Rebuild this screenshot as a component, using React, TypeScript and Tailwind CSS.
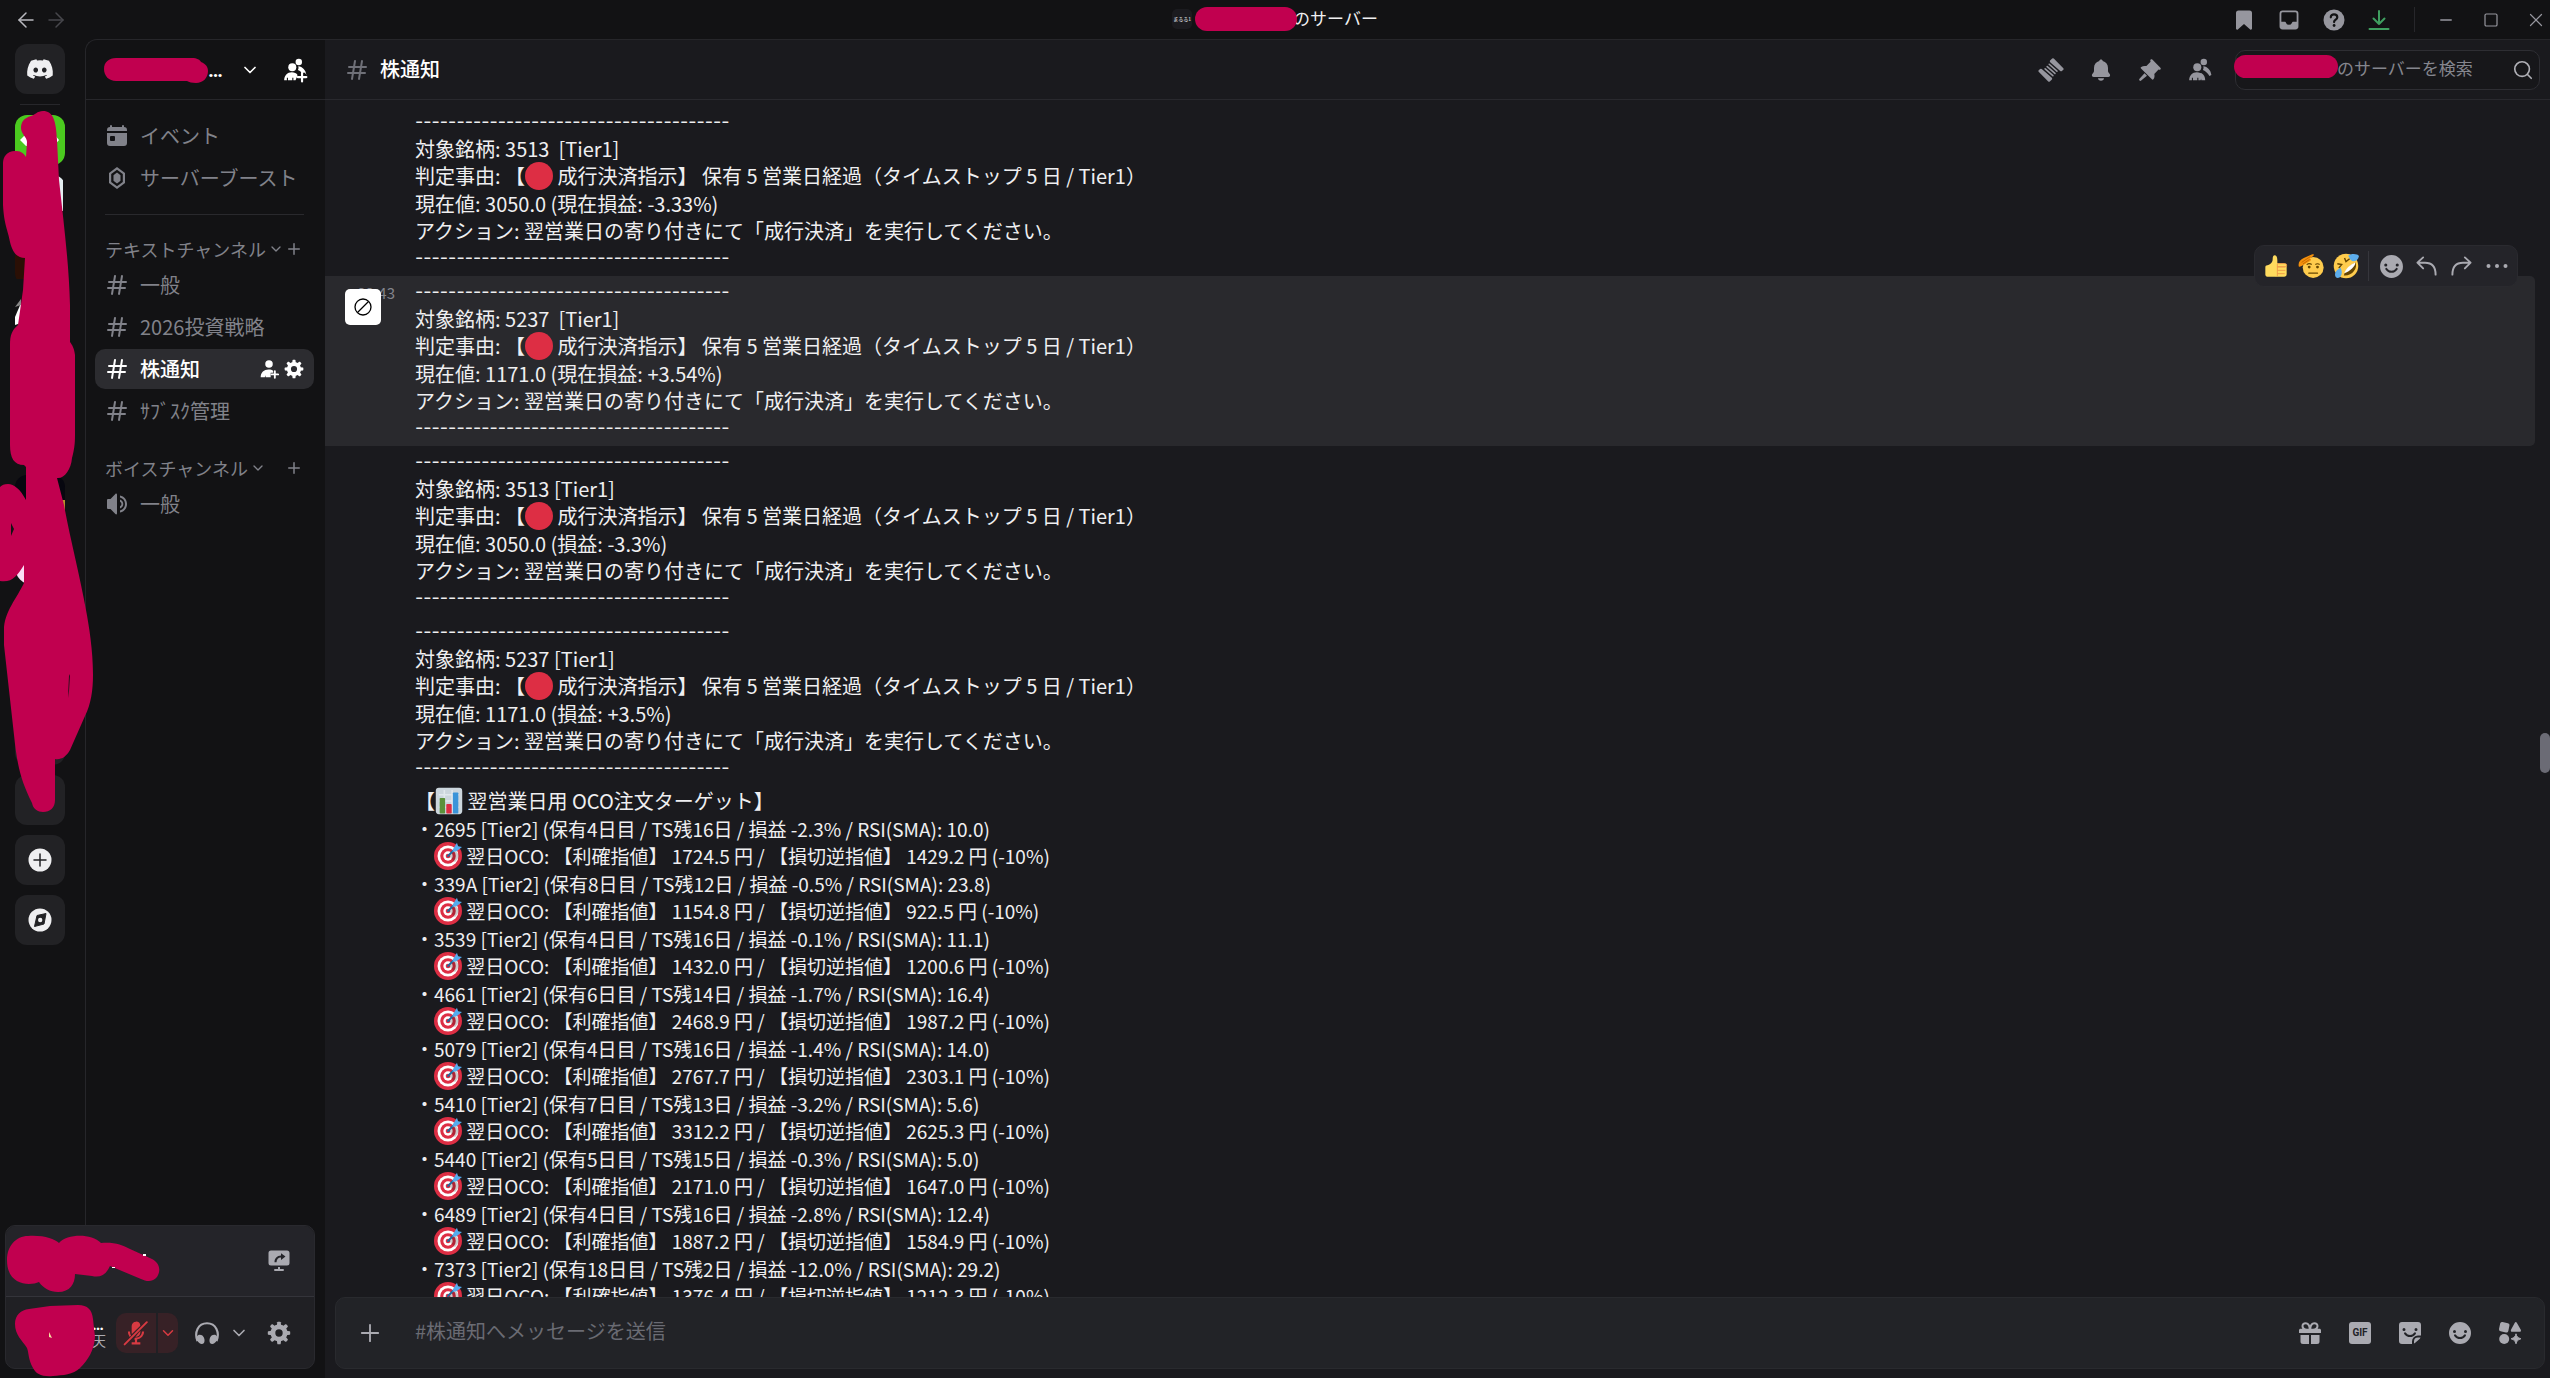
import type { ReactNode } from "react";
import { ArrowLeft, ArrowRight, ChevronDown, Minus, Plus, Search, Square, X } from "lucide-react";
import { FaDiscord } from "react-icons/fa";

type IconProps = { className?: string };

const Svg = ({ className = "w-6 h-6", children }: IconProps & { children: ReactNode }) => (
  <svg viewBox="0 0 24 24" fill="currentColor" aria-hidden="true" className={`${className} shrink-0`}>
    {children}
  </svg>
);

const HashIcon = ({ className }: IconProps) => (
  <Svg className={className}>
    <path
      fillRule="evenodd"
      d="M10.99 3.16A1 1 0 1 0 9 2.84L8.15 8H4a1 1 0 0 0 0 2h3.82l-.67 4H3a1 1 0 1 0 0 2h3.82l-.8 4.84a1 1 0 0 0 1.97.32L8.85 16h4.97l-.8 4.84a1 1 0 0 0 1.97.32l.86-5.16H20a1 1 0 1 0 0-2h-3.82l.67-4H21a1 1 0 1 0 0-2h-3.82l.8-4.84a1 1 0 1 0-1.97-.32L15.15 8h-4.97l.8-4.84ZM14.15 14l.67-4H9.85l-.67 4h4.97Z"
    />
  </Svg>
);

const CalendarIcon = () => (
  <Svg>
    <path d="M6 1a1 1 0 0 1 1 1v1h10V2a1 1 0 1 1 2 0v1a3 3 0 0 1 3 3v1H2V6a3 3 0 0 1 3-3V2a1 1 0 0 1 1-1Z" />
    <path fillRule="evenodd" d="M2 9h20v10a3 3 0 0 1-3 3H5a3 3 0 0 1-3-3V9Zm4 3a1 1 0 0 0-1 1v3a1 1 0 0 0 1 1h3a1 1 0 0 0 1-1v-3a1 1 0 0 0-1-1H6Z" />
  </Svg>
);

const BoostIcon = () => (
  <Svg>
    <path fillRule="evenodd" d="M12 1 20 7v10l-8 6-8-6V7l8-6Zm0 2.800L6.200 8.100v7.800l5.800 4.300 5.800-4.300V8.100L12 3.800Z" />
    <path d="m12 6.500 3.500 2.700v5.600L12 17.500l-3.500-2.700V9.200Z" />
  </Svg>
);

const SpeakerIcon = () => (
  <Svg>
    <path d="M12 2.500c0-.9-1-1.200-1.600-.6L5.500 7H3a1 1 0 0 0-1 1v8a1 1 0 0 0 1 1h2.500l4.900 5.100c.6.600 1.600.3 1.600-.6v-19Z" />
    <path d="M15 3.500c4.300.8 7 4.200 7 8.500s-2.700 7.700-7 8.500v-2c3.200-.8 5-3.300 5-6.500s-1.800-5.700-5-6.500v-2Z" />
    <path d="M15 7.500c2 .6 3.300 2.300 3.300 4.500S17 15.900 15 16.500v-2.200c1-.5 1.400-1.300 1.400-2.300s-.4-1.800-1.400-2.300V7.500Z" />
  </Svg>
);

const PeopleIcon = ({ plus = false }: { plus?: boolean }) => (
  <Svg className="w-[26px] h-[26px]">
    <circle cx="9.500" cy="9.500" r="3.700" />
    <path d="M2 21.500c0-4.500 3-7.500 7-7.500 2.500 0 4.300 1 5.500 2.500L12.500 21.500H10.500v-2.300h-1v2.300h-4v-2.300h-1v2.300H2Z" />
    {!plus && <path d="M12 15h1.500c2 1.300 3.300 3.600 3.300 6.500h-3.500Z" />}
    <circle cx="15.500" cy="4.500" r="3" />
    <path d="M15 8.500c4 .3 7 3.600 7.500 8l-1.800 1c-1.500-2.600-3.400-4.300-6-5.500.6-1.100.7-2.400.3-3.500Z" />
    {plus && (
      <>
        <path stroke="#121214" strokeWidth="6" d="M18.500 14.500v8M14.500 18.500h8" />
        <path stroke="currentColor" strokeWidth="2" strokeLinecap="round" d="M18.500 14.500v8M14.500 18.500h8" />
      </>
    )}
  </Svg>
);

const PersonAddIcon = () => (
  <Svg className="w-5 h-5">
    <circle cx="12" cy="6" r="4.500" />
    <path d="M2 22c0-6 4-9.500 9.500-9.500 2.500 0 4.300.6 5.500 1.500v2.500h-3V22H8l-.5-2.500L7 22H2Z" />
    <path stroke="currentColor" strokeWidth="2.200" strokeLinecap="round" d="M19 14.500v8M15 18.500h8" />
  </Svg>
);

const GearIcon = ({ className }: IconProps) => (
  <Svg className={className}>
    {[0, 45, 90, 135, 180, 225, 270, 315].map((a) => (
      <path key={a} d="M9.800 5 10.300 1.300Q10.500.8 11 .8h2q.5 0 .7.5L14.200 5Z" transform={`rotate(${a} 12 12)`} />
    ))}
    <path fillRule="evenodd" d="M12 3.500a8.500 8.500 0 1 1 0 17 8.500 8.500 0 0 1 0-17Zm0 4.800a3.700 3.700 0 1 0 0 7.400 3.700 3.700 0 0 0 0-7.400Z" />
  </Svg>
);

const SmileIcon = ({ className }: IconProps) => (
  <Svg className={className}>
    <path
      fillRule="evenodd"
      d="M12 1a11 11 0 1 1 0 22 11 11 0 0 1 0-22ZM6.500 9a1.500 1.500 0 1 0 0 3 1.500 1.500 0 0 0 0-3Zm11 0a1.500 1.500 0 1 0 0 3 1.500 1.500 0 0 0 0-3ZM7.900 13.800a1 1 0 0 0-1.700 1.100 6.900 6.900 0 0 0 11.600 0 1 1 0 0 0-1.700-1.100 4.900 4.900 0 0 1-8.200 0Z"
    />
  </Svg>
);

const ThreadsIcon = () => (
  <Svg className="w-[26px] h-[26px]">
    <g transform="rotate(-43 12 12)">
      <path d="M2.500 5.500q0-1 1-1h1.700q1 0 1.200 1l1.200 12q0 1.500-1 1.500H4q-1 0-1.100-1ZM16.400 6.500q0-1.500 1-1.500H20q1 0 1.100 1l.4 12.500q0 1-1 1h-1.700q-1 0-1.200-1Z" />
      <path stroke="currentColor" strokeWidth="1.500" strokeLinecap="round" d="m8.800 7.500.9 9.500M11.600 7.300l.9 9.500M14.400 7l.9 9.500" />
    </g>
  </Svg>
);

const BellIcon = () => (
  <Svg>
    <path d="M12 1.500c.9 0 1.600.6 1.700 1.400 3.300.8 5.300 3.400 5.300 7.100v3c0 .8.300 1.500.9 2l.8.900c1 1.200.2 3.100-1.500 3.100H4.800c-1.700 0-2.500-1.900-1.500-3.100l.8-.9c.6-.5.900-1.200.9-2v-3c0-3.700 2-6.300 5.300-7.100.1-.8.800-1.400 1.700-1.400ZM9 20.200h6c0 1.500-1.300 2.500-3 2.500s-3-1-3-2.500Z" />
  </Svg>
);

const PinIcon = () => (
  <Svg>
    <path d="M12.500 1.700c.5-.6 1.300-.6 1.800-.1l8.100 8.100c.6.6.5 1.300-.1 1.800-.6.400-1.200.4-1.800 0l-4.200 4.400c.5 2.100.2 3.800-.9 5.300-.4.5-1 .6-1.500.1L3 10.400c-.5-.5-.4-1.200.2-1.500 1.600-.9 3.200-1.200 5.200-.8l4.200-4.400c-.5-.7-.5-1.400-.1-2ZM6.500 15.200l2.500 2.500-5.800 4.900c-.6.5-1.300.3-1.700-.1-.5-.4-.5-1.100 0-1.700l5-5.600Z" />
  </Svg>
);

const GiftIcon = () => (
  <Svg>
    <path fillRule="evenodd" d="M7.500 1.200c2 0 3.600 1.200 4.500 3 .9-1.800 2.500-3 4.500-3 2.300 0 4 1.600 4 3.800 0 1-.3 2-.9 2.800H21.500c.8 0 1.500.700 1.500 1.500V12H1V9.300c0-.8.7-1.500 1.500-1.500h1.900A4.300 4.300 0 0 1 3.500 5c0-2.200 1.700-3.800 4-3.800Zm0 2C6.300 3.200 5.500 4 5.500 5c0 1.600 1.500 2.800 3.500 2.800h1.700c0-2.600-1.300-4.600-3.200-4.600Zm9 0c-1.900 0-3.200 2-3.200 4.600H15c2 0 3.500-1.200 3.500-2.800 0-1-.8-1.800-2-1.800Z" />
    <path d="M2.500 14H11v9H5a2.500 2.500 0 0 1-2.500-2.500V14ZM13 14h8.500v6.500A2.500 2.500 0 0 1 19 23h-6v-9Z" />
  </Svg>
);

const StickerIcon = () => (
  <Svg>
    <path fillRule="evenodd" d="M4 1h16a3 3 0 0 1 3 3v10.500h-3a6 6 0 0 0-6 6V23H4a3 3 0 0 1-3-3V4a3 3 0 0 1 3-3Zm2 6a1.500 1.500 0 1 0 0 3 1.500 1.500 0 0 0 0-3Zm12 0a1.500 1.500 0 1 0 0 3 1.500 1.500 0 0 0 0-3ZM7.900 11.800a1 1 0 0 0-1.700 1.100 6.900 6.900 0 0 0 11.600 0 1 1 0 0 0-1.700-1.100 4.900 4.900 0 0 1-8.200 0Z" />
    <path d="M16 22.500v-2a4 4 0 0 1 4-4h2.500c-.3.700-.6 1.200-1.200 1.800l-3.500 3c-.6.600-1.100.9-1.800 1.200Z" />
  </Svg>
);

const AppsIcon = () => (
  <Svg>
    <rect x="1.500" y="1.500" width="9.500" height="9.500" rx="2" transform="rotate(12 6.200 6.200)" />
    <path d="M16.800 1.700c.5-.9 1.500-.9 2 0l4 7c.5 1-.1 2.100-1.100 2.100h-7.600c-1 0-1.600-1.100-1.100-2.100l3.800-7Z" />
    <circle cx="6.200" cy="18" r="5" />
    <path d="M18 12.800c.6 2.700 1.700 4 4.900 5-3.200 1-4.300 2.300-4.900 5-.6-2.700-1.700-4-4.900-5 3.200-1 4.300-2.300 4.900-5Z" stroke="currentColor" />
  </Svg>
);

const MicOffIcon = () => (
  <Svg className="w-[26px] h-[26px]">
    <path d="M12 1.500a4 4 0 0 1 4 3.700L8.200 13A4 4 0 0 1 8 11.500v-6a4 4 0 0 1 4-4ZM16 10v1.500a4 4 0 0 1-4.500 4L16 10ZM4.500 10.500h2c0 1.500.3 2.700 1 3.700l-1.300 1.400a8 8 0 0 1-1.700-5.100ZM17.500 10.500h2a7.500 7.500 0 0 1-6.500 7.500v2.500h3v2H8v-2h3V18l-1-.2 1.600-1.600c3.400 0 5.900-2.200 5.900-5.700Z" />
    <path d="M1.500 22.500 22 2" stroke="currentColor" strokeWidth="1.800" strokeLinecap="round" />
  </Svg>
);

const HeadphonesIcon = () => (
  <Svg className="w-[26px] h-[26px]">
    <path d="M3.200 19.500C0 11.500 3.700 3 12 3s12 8.500 8.800 16.500" fill="none" stroke="currentColor" strokeWidth="2" />
    <path d="M4 13.800c3-.5 5 1 5.600 3.700.6 2.900-.5 4.700-2.600 4.700-2.500 0-4.500-3.500-5-6.200ZM20 13.800c-3-.5-5 1-5.600 3.700-.6 2.900.5 4.700 2.600 4.700 2.500 0 4.500-3.500 5-6.200Z" />
  </Svg>
);

const ShareScreenIcon = () => (
  <Svg>
    <path fillRule="evenodd" d="M4 1.500h16a2.500 2.500 0 0 1 2.500 2.500v10a2.500 2.500 0 0 1-2.500 2.500H4A2.500 2.500 0 0 1 1.500 14V4A2.500 2.500 0 0 1 4 1.500ZM14 4.200v2.300c-4 .2-6.500 2.800-6.500 6.700h2c.2-2.800 1.700-4.500 4.500-4.600v2.300l4.500-3.300L14 4.200Z" />
    <path d="M11 18h2v2h3a1 1 0 1 1 0 2H8a1 1 0 1 1 0-2h3v-2Z" />
  </Svg>
);

const ReplyIcon = ({ className }: IconProps) => (
  <Svg className={className}>
    <path fill="none" stroke="currentColor" strokeWidth="2" strokeLinecap="round" strokeLinejoin="round" d="M8.500 2.500 2.500 8l6 6M3 8h7.500C17 8 21.500 12 21.500 20.500" />
  </Svg>
);

// Emoji drawings
const Emoji = ({ label, children }: { label: string; children: ReactNode }) => (
  <svg viewBox="0 0 36 36" role="img" aria-label={label} className="inline-block w-7 h-7 align-top">
    {children}
  </svg>
);

const RedCircle = () => (
  <Emoji label="赤い丸">
    <circle cx="18" cy="18" r="18" fill="#dd2e44" />
  </Emoji>
);

const Target = () => (
  <Emoji label="的">
    <circle cx="18" cy="18" r="18" fill="#dd2e44" />
    <circle cx="18" cy="18" r="13.500" fill="#fff" />
    <circle cx="18" cy="18" r="10" fill="#dd2e44" />
    <circle cx="18" cy="18" r="6" fill="#fff" />
    <circle cx="18" cy="18" r="3" fill="#dd2e44" />
    <path d="M18.500 17.500 27 26l6-8-5-7Z" fill="#000" opacity=".2" />
    <path d="M18 18 29 7" stroke="#269" strokeWidth="2.500" strokeLinecap="round" />
    <path d="M25 8.500 29.500 1l1.500 4.500 5 1-7 5.500-5.500.5Z" fill="#55acee" />
  </Emoji>
);

const BarChart = () => (
  <Emoji label="棒グラフ">
    <rect x="1" y="1" width="34" height="34" rx="4" fill="#ccd6dd" />
    <path d="M5 10h26M5 18h26M5 26h26M12 4v28M22 4v28" stroke="#e1e8ed" strokeWidth="2" />
    <rect x="6" y="14" width="7" height="20" rx="1" fill="#5c913b" />
    <rect x="14.500" y="22" width="7" height="12" rx="1" fill="#dd2e44" />
    <rect x="23" y="7" width="7" height="27" rx="1" fill="#3b94d9" />
  </Emoji>
);

const ThumbsUp = () => (
  <Emoji label="いいね">
    <path d="M5 17c4-1 8-4 8-9 0-4 1-6 3-6s4 2 4 7v6h-1v19H5c-2 0-3-2-3-3V20c0-2 1-3 3-3Z" fill="#ffdb5e" />
    <rect x="16" y="14" width="18" height="20" rx="4" fill="#ffdb5e" />
    <path d="M20 14.500h12q2 0 2 2.300t-2 2.200H20M20 19.500h12M20 24.500h12M20 29.500h11M20 15v18" fill="none" stroke="#ee9547" strokeWidth="1.300" />
  </Emoji>
);

const Salute = () => (
  <Emoji label="敬礼">
    <circle cx="21" cy="20" r="14.500" fill="#ffcc4d" />
    <path d="M12 16.500c2-2 5-2 7-.5M24 16c2-1.500 4-1.500 6 0" stroke="#664500" strokeWidth="1.500" fill="none" />
    <circle cx="15.500" cy="19.500" r="2" fill="#664500" />
    <circle cx="27" cy="19.500" r="2" fill="#664500" />
    <path d="M15 28h12" stroke="#664500" strokeWidth="1.800" strokeLinecap="round" />
    <path d="M1 18C0 13 3 9 8 7l11-5c3-1 4 0 2 2l-5 4c2 0 3 1 1 3L5 18c-2 1-4 2-4 0Z" fill="#f4900c" />
    <path d="m5 13 12-8M7 15l9-6" stroke="#c56a00" strokeWidth="1.300" />
  </Emoji>
);

const Rofl = () => (
  <Emoji label="大笑い">
    <circle cx="18" cy="18" r="17" fill="#ffcc4d" />
    <path d="M31 13c4 8-5 19-16 18 2-8 9-15 16-18Z" fill="#664500" />
    <path d="M30.500 13c2 4-8 13-15 15 2-6 8-12 15-15Z" fill="#fff" />
    <path d="m6 15 6 1-4 5M16 7l2 5 5-4" fill="none" stroke="#664500" strokeWidth="2" />
    <path d="M21 4c4-4 13-3 15 0-1 7-8 9-11 6-2-2-2-4-4-6ZM10 20c3 4 3 11-1 14-4 2-7-1-6-6 1-4 4-5 7-8Z" fill="#5dadec" />
  </Emoji>
);

const RULE = "-".repeat(38);

type Signal = { code: string; gap: string; status: string; hovered?: boolean };

const signals: Signal[] = [
  { code: "3513", gap: "\u00a0 ", status: "3050.0 (現在損益: -3.33%)" },
  { code: "5237", gap: "\u00a0 ", status: "1171.0 (現在損益: +3.54%)", hovered: true },
  { code: "3513", gap: " ", status: "3050.0 (損益: -3.3%)" },
  { code: "5237", gap: " ", status: "1171.0 (損益: +3.5%)" },
];

const orders = [
  { code: "2695", held: 4, left: 16, pl: "-2.3", rsi: "10.0", take: "1724.5", stop: "1429.2" },
  { code: "339A", held: 8, left: 12, pl: "-0.5", rsi: "23.8", take: "1154.8", stop: "922.5" },
  { code: "3539", held: 4, left: 16, pl: "-0.1", rsi: "11.1", take: "1432.0", stop: "1200.6" },
  { code: "4661", held: 6, left: 14, pl: "-1.7", rsi: "16.4", take: "2468.9", stop: "1987.2" },
  { code: "5079", held: 4, left: 16, pl: "-1.4", rsi: "14.0", take: "2767.7", stop: "2303.1" },
  { code: "5410", held: 7, left: 13, pl: "-3.2", rsi: "5.6", take: "3312.2", stop: "2625.3" },
  { code: "5440", held: 5, left: 15, pl: "-0.3", rsi: "5.0", take: "2171.0", stop: "1647.0" },
  { code: "6489", held: 4, left: 16, pl: "-2.8", rsi: "12.4", take: "1887.2", stop: "1584.9" },
  { code: "7373", held: 18, left: 2, pl: "-12.0", rsi: "29.2", take: "1376.4", stop: "1212.3" },
];

const Line = ({ children }: { children: ReactNode }) => <p className="h-[27px] leading-[27px]">{children}</p>;
const EmojiLine = ({ children }: { children: ReactNode }) => <p className="h-7 leading-7">{children}</p>;
const Rule = () => <p className="h-[27px] leading-[27px] font-[Inter,sans-serif] text-lg">{RULE}</p>;

function MessageActions() {
  const button = "w-[35px] h-9 flex items-center justify-center";
  return (
    <div className="absolute right-[17px] -top-[31px] h-[42px] flex items-center px-[3px] rounded-[10px] border border-[#2a2a2f] bg-[#242429] text-[#aaaab1]">
      <button aria-label="いいね" className={button}><span className="flex [&>svg]:w-6 [&>svg]:h-6"><ThumbsUp /></span></button>
      <button aria-label="敬礼" className={button}><span className="flex [&>svg]:w-[26px] [&>svg]:h-[26px]"><Salute /></span></button>
      <button aria-label="大笑い" className={button}><span className="flex [&>svg]:w-[26px] [&>svg]:h-[26px]"><Rofl /></span></button>
      <div className="w-px h-[30px] mx-[5px] bg-[#36363c]" />
      <button aria-label="リアクション" className={button}><SmileIcon className="w-[25px] h-[25px]" /></button>
      <button aria-label="返信" className={button}><ReplyIcon className="w-[23px] h-[23px]" /></button>
      <button aria-label="転送" className={button}><ReplyIcon className="w-[23px] h-[23px] -scale-x-100" /></button>
      <button aria-label="その他" className={button}>
        <Svg><circle cx="3.500" cy="12" r="2" /><circle cx="12" cy="12" r="2" /><circle cx="20.500" cy="12" r="2" /></Svg>
      </button>
    </div>
  );
}

function SignalMessage({ code, gap, status, hovered }: Signal) {
  return (
    <article className={`relative mr-[15px] pl-[90px] pt-[2px] pb-[5px] rounded-r-[5px] ${hovered ? "bg-[#29292d]" : ""}`}>
      {hovered && (
        <>
          <time className="absolute left-0 top-[3px] w-[70px] text-right text-[15px] leading-[27px] text-[#83848c]">22:43</time>
          <div className="absolute left-5 top-[13px] w-9 h-9 rounded-[5px] bg-white flex items-center justify-center text-black">
            <svg viewBox="0 0 20 20" className="w-5 h-5" fill="none" stroke="currentColor" strokeWidth="1.300">
              <circle cx="10" cy="10" r="8" />
              <path d="M4.500 15.500 15.500 4.500" />
            </svg>
          </div>
          <MessageActions />
        </>
      )}
      <Rule />
      <Line>対象銘柄: {code}{gap}[Tier1]</Line>
      <EmojiLine>判定事由: 【<RedCircle /> 成行決済指示】 保有 5 営業日経過（タイムストップ 5 日 / Tier1）</EmojiLine>
      <Line>現在値: {status}</Line>
      <Line>アクション: 翌営業日の寄り付きにて「成行決済」を実行してください。</Line>
      <Rule />
    </article>
  );
}

function TitleBar() {
  const slot = "w-6 h-6 flex items-center justify-center";
  return (
    <header className="relative h-[39px] shrink-0 flex items-center justify-between pl-[14px] pr-[2px] text-[#96969e]">
      <nav className="flex gap-[6px]">
        <button aria-label="戻る" className={slot}><ArrowLeft className="w-6 h-6 text-[#b9b9bf]" strokeWidth={1.5} /></button>
        <button aria-label="進む" className={slot}><ArrowRight className="w-6 h-6 text-[#47474c]" strokeWidth={1.5} /></button>
      </nav>
      <div className="absolute inset-x-0 top-0 h-[38px] flex items-center justify-center pointer-events-none">
        <span className="w-5 h-5 rounded-[5px] bg-[#1b1b1f] text-[5px] leading-5 text-center text-white whitespace-nowrap">まるる1</span>
        <span className="relative z-10 ml-[3px] -mr-1 w-[102px] h-6 rounded-full bg-[#c1004f]" />
        <span className="pb-0.5 text-[17px] text-[#efeff1]">のサーバー</span>
      </div>
      <div className="flex items-center">
        <div className="flex gap-[21px]">
          <button aria-label="ブックマーク" className={slot}><Svg><path d="M6.500 2.500h11A2.500 2.500 0 0 1 20 5v15.500c0 1-1 1.500-1.800.9L12 16l-6.200 5.400c-.8.6-1.800.1-1.800-.9V5a2.500 2.500 0 0 1 2.500-2.500Z" /></Svg></button>
          <button aria-label="受信ボックス" className={slot}><Svg><path fillRule="evenodd" d="M5 1.500h14A3.500 3.500 0 0 1 22.500 5v14a3.500 3.500 0 0 1-3.500 3.500H5A3.500 3.500 0 0 1 1.500 19V5A3.500 3.500 0 0 1 5 1.500Zm0 2A1.500 1.500 0 0 0 3.500 5v9H7c1 0 1.500.6 1.800 1.300a3.500 3.500 0 0 0 6.400 0c.3-.7.8-1.300 1.800-1.300h3.500V5A1.500 1.500 0 0 0 19 3.500H5Z" transform="translate(1.200 1.200) scale(.9)" /></Svg></button>
          <button aria-label="ヘルプ" className={slot}>
            <Svg>
              <circle cx="12" cy="12" r="10.500" />
              <path d="M8.800 9.300c0-1.900 1.400-3 3.200-3s3.300 1.100 3.300 2.900c0 2.500-3.200 2.300-3.200 4.900" fill="none" stroke="#121214" strokeWidth="2.200" strokeLinecap="round" />
              <circle cx="12.100" cy="17.500" r="1.400" fill="#121214" />
            </Svg>
          </button>
          <button aria-label="ダウンロード" className={`${slot} text-[#3f9f60]`}>
            <Svg><path d="M12 3v13M6.500 10.500 12 16l5.500-5.500M2.500 21h19" fill="none" stroke="currentColor" strokeWidth="2" strokeLinecap="round" strokeLinejoin="round" /></Svg>
          </button>
        </div>
        <div className="w-px h-[25px] ml-[23px] mr-[19px] bg-[#27272b]" />
        <div className="flex gap-[21px]">
          <button aria-label="最小化" className={slot}><Minus className="w-[18px] h-[18px]" strokeWidth={1.8} /></button>
          <button aria-label="最大化" className={slot}><Square className="w-4 h-4" strokeWidth={1.8} /></button>
          <button aria-label="閉じる" className={slot}><X className="w-[22px] h-[22px]" strokeWidth={1.3} /></button>
        </div>
      </div>
    </header>
  );
}

function ServerRail() {
  const tile = "w-[50px] h-[50px] shrink-0 rounded-xl overflow-hidden";
  const action = `${tile} bg-[#222225] flex items-center justify-center text-[#efeff1]`;
  return (
    <nav aria-label="サーバー" className="relative w-[85px] shrink-0 pl-[15px] pt-[5px]">
      <button aria-label="ダイレクトメッセージ" className={action}><FaDiscord className="w-7 h-7" /></button>
      <div className="w-10 h-px ml-[5px] my-[10px] bg-[#27272b]" />
      <div className="flex flex-col gap-[10px]">
        <div className={`${tile} bg-[#4bca1f]`}>
          <svg viewBox="0 0 50 50" fill="#fff"><path d="m5 25 6-6h28l5 6-5 6H11Z" /></svg>
        </div>
        <div className={`${tile} flex justify-end`}><div className="w-2 h-9 mr-[2px] bg-[#e3edf0]" /></div>
        <div className={tile}><div className="w-3 h-6 mt-5 bg-[#2a0f05]" /></div>
        <div className={tile}>
          <svg viewBox="0 0 50 50"><path d="M0 22 6 8v20L0 30Z" fill="#fff" /><path d="m0 12 6-8v6Z" fill="#888" /></svg>
        </div>
        <div className={tile} />
        <div className={tile} />
        <div className={`${tile} bg-[#07070f] flex justify-end items-center`}><div className="w-1 h-3 mt-3 bg-[#b9922b]" /></div>
        <div className={tile}><div className="w-9 h-9 mt-[14px] rounded-full bg-[#fbdcf5]" /></div>
        <div className={tile} />
        <div className={tile} />
        <div className={`${tile} bg-[#222225]`} />
        <button aria-label="フォルダ" className={action} />
        <button aria-label="サーバーを追加" className={action}>
          <Svg><circle cx="12" cy="12" r="11.500" /><path d="M12 6v12M6 12h12" stroke="#222225" strokeWidth="1.500" strokeLinecap="round" /></Svg>
        </button>
        <button aria-label="サーバーを探す" className={action}>
          <Svg>
            <circle cx="12" cy="12" r="11.500" />
            <path d="m9 7.500 9-2-2 10.500-9.500 2.500Z" fill="#222225" stroke="#222225" strokeLinejoin="round" />
            <circle cx="12.200" cy="12" r="2.200" />
          </Svg>
        </button>
      </div>
      {/* marker strokes over the server list, in page units from the top of the rail */}
      <svg viewBox="0 39 95 780" className="absolute left-0 top-0 z-20 w-[95px] h-[780px]" fill="#c1004f">
        <path d="M43 111C37 111 35 115 31 116C24 118 21 122 21 128C21 134 27 137 27 142L26 157C23 152 20 151 15 151C7 151 3 157 3 163L3 205C4 225 8 230 10 242C13 254 18 258 25 258L23 290L18 325C12 330 10 335 10 345L10 445C10 458 14 465 24 465L26 467L26 500C20 489 14 484 8 484C4 484 2 485 0 487L0 581C12 583 17 576 24 565L24 583C17 598 4 612 4 630L4 645L14 735C17 765 21 781 32 803C33 809 38 812 43 812C50 812 55 808 55 800L55 759C61 760 66 757 70 750L85 716C91 704 93 690 93 675C93 650 89 626 86 610C80 576 70 538 64 505L57 478C64 479 71 470 72 458C74 450 75 445 75 435L75 355C74 347 72 345 70 342L70 305C69 265 64 225 59 180L57 140C56 120 53 111 43 111Z" />
        <path d="m11 523 3 6-3 7ZM70 674l-1 17-1 7 1-22Z" fill="#121214" />
      </svg>
    </nav>
  );
}

type ChannelProps = { name: string; icon: ReactNode; selected?: boolean };

function Channel({ name, icon, selected }: ChannelProps) {
  return (
    <div className={`h-10 flex items-center pl-[10px] pr-[10px] rounded-[10px] ${selected ? "bg-[#2c2c30] text-white" : "text-[#81828a]"}`}>
      <a href="#channel" className={`flex-1 flex items-center gap-[11px] text-xl ${selected ? "font-medium" : ""}`}>
        {icon}
        {name}
      </a>
      {selected && (
        <div className="flex items-center gap-[5px]">
          <button aria-label="招待"><PersonAddIcon /></button>
          <button aria-label="チャンネルの編集"><GearIcon className="w-5 h-5" /></button>
        </div>
      )}
    </div>
  );
}

const CategoryHeading = ({ name }: { name: string }) => (
  <div className="h-6 pl-[10px] pr-[11px] flex items-center justify-between text-[#81828a]">
    <button className="flex items-center gap-[2px] text-lg leading-6">
      {name}
      <ChevronDown className="w-4 h-4" strokeWidth={2} />
    </button>
    <button aria-label="チャンネルを作成"><Plus className="w-[18px] h-[18px]" strokeWidth={2} /></button>
  </div>
);

function Sidebar() {
  return (
    <aside className="flex-1 min-w-0 border-t border-l border-[#26262a] rounded-tl-xl">
      <div className="h-[60px] flex items-center border-b border-[#26262a] pl-[18px] pr-[17px] text-white">
        <svg viewBox="0 0 104 26" className="w-[104px] h-[26px] shrink-0" fill="#c1004f">
          <path d="M12 1h76c5 0 8 2 9 4 5 2 7 5 7 9 0 7-5 12-12 12-4 0-7-1-9-2H12C5 24 0 19 0 12S5 1 12 1Z" />
        </svg>
        <span className="font-[Roboto,sans-serif] text-xl font-bold">…</span>
        <button aria-label="サーバーメニュー" className="ml-auto mr-[22px]"><ChevronDown className="w-5 h-5" strokeWidth={2} /></button>
        <button aria-label="サーバーへ招待"><PeopleIcon plus /></button>
      </div>
      <div className="pl-[9px] pr-[11px] pt-4">
        <div className="flex flex-col gap-[2px]">
          <Channel name="イベント" icon={<CalendarIcon />} />
          <Channel name="サーバーブースト" icon={<BoostIcon />} />
        </div>
        <div className="h-px mx-[10px] mt-4 mb-[22px] bg-[#29292d]" />
        <CategoryHeading name="テキストチャンネル" />
        <div className="mt-1 mb-[25px] flex flex-col gap-[2px]">
          <Channel name="一般" icon={<HashIcon />} />
          <Channel name="2026投資戦略" icon={<HashIcon />} />
          <Channel name="株通知" icon={<HashIcon />} selected />
          <Channel name="ｻﾌﾞｽｸ管理" icon={<HashIcon />} />
        </div>
        <CategoryHeading name="ボイスチャンネル" />
        <div className="mt-1">
          <Channel name="一般" icon={<SpeakerIcon />} />
        </div>
      </div>
    </aside>
  );
}

function UserPanel() {
  return (
    <section aria-label="ユーザー" className="relative ml-[5px] mr-[10px] mb-[9px] rounded-[10px] border border-[#29292e] bg-[#202024] text-[#aaaab1]">
      <div className="h-[71px] flex items-center justify-end pr-[23px] rounded-t-[10px] border-b border-[#34343a] bg-[#242429]">
        <button aria-label="画面を共有"><ShareScreenIcon /></button>
      </div>
      <div className="h-[71px] flex items-center pr-[23px]">
        <div className="flex-1 min-w-0 pl-[86px] whitespace-nowrap font-[Roboto,'Noto_Sans_CJK_JP',sans-serif]">
          <p className="text-base leading-4 font-bold text-white">…</p>
          <p className="text-sm leading-4">天</p>
        </div>
        <div className="flex gap-[2px] text-[#d83a42]">
          <button aria-label="ミュート解除" className="w-10 h-10 rounded-l-[10px] bg-[#372126] flex items-center justify-center"><MicOffIcon /></button>
          <button aria-label="入力設定" className="w-5 h-10 rounded-r-[10px] bg-[#372126] flex items-center justify-center"><ChevronDown className="w-[18px] h-[18px]" /></button>
        </div>
        <button aria-label="スピーカーミュート" className="ml-4"><HeadphonesIcon /></button>
        <button aria-label="出力設定" className="ml-[9px]"><ChevronDown className="w-5 h-5" /></button>
        <button aria-label="設定" className="ml-[18px]"><GearIcon className="w-6 h-6" /></button>
      </div>
      <svg viewBox="5 1226 310 152" className="absolute -left-px -top-px w-[310px] h-[152px] pointer-events-none" fill="#c1004f">
        <path d="M7 1261C7 1247 16 1237 28 1237C44 1236 54 1240 59 1244C67 1235 91 1234 101 1244C115 1243 122 1246 130 1250L152 1260C160 1264 161 1272 157 1278C153 1283 147 1283 141 1280L110 1267C106 1276 100 1279 92 1277L75 1275C75 1285 70 1293 58 1293C50 1293 43 1289 39 1283C30 1287 7 1287 7 1261Z" />
        <path d="M15 1325C15 1316 21 1311 29 1310L50 1307L78 1306C88 1306 92 1311 93 1320L95 1338C94 1352 88 1361 80 1369C73 1376 63 1376 53 1377C42 1378 36 1375 33 1369C28 1360 29 1354 27 1349C22 1341 15 1336 15 1325Z" />
        <path d="M143 1255h3v2h-3ZM112 1268h3v1h-3Z" fill="#fff" />
        <path d="m49 1333 3 6-3-1Z" fill="#f3e2a0" />
      </svg>
    </section>
  );
}

function ChannelHeader() {
  return (
    <header className="h-[60px] shrink-0 border-b border-[#29292e] flex items-center pl-5 pr-[10px] text-[#96969e]">
      <HashIcon className="w-6 h-6 text-[#6f7078]" />
      <h1 className="ml-[11px] pb-0.5 text-xl font-medium text-white">株通知</h1>
      <div className="ml-auto mr-[22px] flex items-center gap-[25px]">
        <button aria-label="スレッド"><ThreadsIcon /></button>
        <button aria-label="通知設定"><BellIcon /></button>
        <button aria-label="ピン留め"><PinIcon /></button>
        <button aria-label="メンバー"><PeopleIcon /></button>
      </div>
      <div className="relative w-[305px] h-10 flex items-center rounded-[10px] border border-[#2e2e33] bg-[#17171a]">
        <input
          aria-label="サーバーを検索"
          placeholder="のサーバーを検索"
          className="flex-1 min-w-0 h-full pl-[101px] pb-1 bg-transparent text-[17px] outline-none placeholder:text-[#85868e]"
        />
        <Search className="w-[22px] h-[22px] mr-[5px] text-[#b0b0b6]" strokeWidth={1.8} />
        <span className="absolute -left-[2px] top-1 w-[104px] h-[23px] rounded-full bg-[#c1004f]" />
      </div>
    </header>
  );
}

function Composer() {
  return (
    <form className="h-[72px] shrink-0 ml-[10px] mr-[5px] mb-[9px] flex items-center pl-5 pr-[22px] rounded-[10px] border border-[#292a2e] bg-[#222327] text-[#aaaab1]">
      <button type="button" aria-label="ファイルを添付"><Plus className="w-7 h-7" strokeWidth={1.6} /></button>
      <input
        aria-label="メッセージ"
        placeholder="#株通知へメッセージを送信"
        className="flex-1 min-w-0 ml-[31px] h-full pb-1.5 bg-transparent text-xl outline-none placeholder:text-[#6a6b73]"
      />
      <div className="flex gap-[26px]">
        <button type="button" aria-label="ギフト"><GiftIcon /></button>
        <button type="button" className="w-6 h-6 flex items-center justify-center">
          <span className="w-[22px] h-[22px] rounded-[3px] bg-[#aaaab1] text-[#222327] font-[Roboto,sans-serif] text-[10px] leading-[22px] font-bold text-center">GIF</span>
        </button>
        <button type="button" aria-label="スタンプ"><StickerIcon /></button>
        <button type="button" aria-label="絵文字"><SmileIcon className="w-6 h-6" /></button>
        <button type="button" aria-label="アプリ"><AppsIcon /></button>
      </div>
    </form>
  );
}

export default function App() {
  return (
    <div className="h-screen flex flex-col overflow-hidden bg-[#121214] font-['Noto_Sans_CJK_JP',sans-serif]">
      <TitleBar />
      <div className="flex-1 min-h-0 flex">
        <div className="w-[325px] shrink-0 flex flex-col">
          <div className="flex-1 min-h-0 flex">
            <ServerRail />
            <Sidebar />
          </div>
          <UserPanel />
        </div>
        <main className="relative flex-1 min-w-0 flex flex-col border-t border-[#26262a] bg-[#1a1a1e]">
          <ChannelHeader />
          <div className="flex-1 min-h-0 overflow-hidden pt-[6px] text-xl text-[#efeff1] whitespace-nowrap">
            {signals.map((s, i) => (
              <SignalMessage key={i} {...s} />
            ))}
            <article className="pl-[90px] pt-px">
              <EmojiLine>【<BarChart /> 翌営業日用 OCO注文ターゲット】</EmojiLine>
              {orders.map((o) => (
                <div key={o.code} className="text-[19px]">
                  <Line>・{o.code} [Tier2] (保有{o.held}日目 / TS残{o.left}日 / 損益 {o.pl}% / RSI(SMA): {o.rsi})</Line>
                  <EmojiLine>　<Target /> 翌日OCO: 【利確指値】 {o.take} 円 / 【損切逆指値】 {o.stop} 円 (-10%)</EmojiLine>
                </div>
              ))}
            </article>
          </div>
          <Composer />
          <div className="absolute right-0 top-[693px] w-[10px] h-10 rounded-full bg-[#6b6b75]" />
        </main>
      </div>
    </div>
  );
}
